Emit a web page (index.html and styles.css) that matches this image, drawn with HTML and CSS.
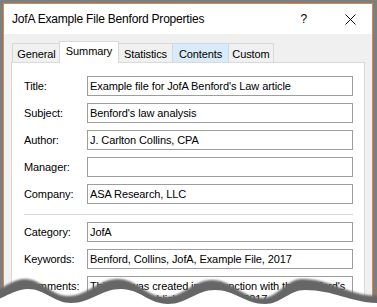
FILE: index.html
```html
<!DOCTYPE html>
<html lang="en">
<head>
  <meta charset="UTF-8">
  <title>JofA Example File Benford Properties</title>
  <link rel="stylesheet" href="styles.css">
</head>
<body>
  <div class="window">
    <div class="titlebar">
      <span class="title">JofA Example File Benford Properties</span>
      <span class="help">?</span>
      <svg class="close" width="11" height="11" viewBox="0 0 11 11">
        <path d="M0.5 0.5 L10.5 10.5 M10.5 0.5 L0.5 10.5" stroke="#111" stroke-width="1" fill="none"/>
      </svg>
    </div>

    <div class="dialog">
      <div class="tabs">
        <div class="tab tab-general">General</div>
        <div class="tab tab-summary selected">Summary</div>
        <div class="tab tab-statistics">Statistics</div>
        <div class="tab tab-contents hover">Contents</div>
        <div class="tab tab-custom">Custom</div>
      </div>

      <div class="panel">
        <div class="row">
          <label for="title">Title:</label>
          <input type="text" id="title" value="Example file for JofA Benford's Law article">
        </div>
        <div class="row">
          <label for="subject">Subject:</label>
          <input type="text" id="subject" value="Benford's law analysis">
        </div>
        <div class="row">
          <label for="author">Author:</label>
          <input type="text" id="author" value="J. Carlton Collins, CPA">
        </div>
        <div class="row">
          <label for="manager">Manager:</label>
          <input type="text" id="manager" value="">
        </div>
        <div class="row">
          <label for="company">Company:</label>
          <input type="text" id="company" value="ASA Research, LLC">
        </div>

        <hr class="sep">

        <div class="row">
          <label for="category">Category:</label>
          <input type="text" id="category" value="JofA">
        </div>
        <div class="row">
          <label for="keywords">Keywords:</label>
          <input type="text" id="keywords" value="Benford, Collins, JofA, Example File, 2017">
        </div>
        <div class="row row-multi">
          <label>Comments:</label>
          <div class="multi">This file was created in conjunction with the Benford's
Law article published by JofA in 2017.</div>
        </div>
      </div>
    </div>
  </div>

  <!-- torn paper edge over the bottom of the screenshot -->
  <svg class="tear" width="377" height="307" viewBox="0 0 377 307">
    <defs>
      <filter id="soft" x="-5%" y="-20%" width="110%" height="140%">
        <feGaussianBlur stdDeviation="1.3"/>
      </filter>
    </defs>
    <path filter="url(#soft)" fill="#666"
          d="M-20 296 C-4 296 9 279 25 279 C42 279 51 296 68 296 C88 296 98 279 118 279 C137 279 146 297 165 297 C184 297 193 280 212 280 C232 280 242 298 262 298 C278 298 286 279 302 279 C332 279 347 296 380 296 L380 310 L-20 310 Z"/>
    <path fill="#fff"
          d="M-17 303 C-1 303 12 289 28 289 C45 289 54 303 71 303 C91 303 101 289 121 289 C140 289 149 304 168 304 C187 304 196 290 215 290 C235 290 245 304 265 304 C281 304 289 290 305 290 C335 290 350 303 380 303 L380 310 L-20 310 Z"/>
  </svg>
</body>
</html>
```

FILE: styles.css
```css
*, *::before, *::after {
  box-sizing: border-box;
}
body {
  margin: 0;
  padding: 3px 4px 0 3px;
  width: 377px;
  height: 307px;
  overflow: hidden;
  position: relative;
  background: #7e7e7e;
  font-family: "Liberation Sans", Arial, sans-serif;
  font-size: 11px;
  letter-spacing: -0.1px;
  color: #000;
}
.window {
  height: 310px;
  border: 1px solid #d9864a;
  border-bottom: none;
  background: #f0f0f0;
}
/* Title bar */
.titlebar {
  height: 30px;
  background: #fff;
  display: flex;
  align-items: center;
  padding-left: 8px;
}
.title {
  font-size: 12px;
  letter-spacing: -0.2px;
  flex: 1;
}
.help {
  font-size: 12px;
  margin-right: 38px;
}
.close {
  display: block;
  margin-right: 16px;
}
/* Tabs */
.dialog {
  padding: 7px 7px 0 7px;
}
.tabs {
  display: flex;
  align-items: flex-end;
  height: 21px;
  padding-left: 1px;
}
.tab {
  height: 19px;
  border: 1px solid #d9d9d9;
  border-bottom: none;
  background: #f0f0f0;
  margin-right: -1px;
  display: flex;
  align-items: center;
  justify-content: center;
  padding-top: 1px;
}
.tab.hover {
  background: #d9eaf9;
  border-color: #c5dcef;
  position: relative;
}
.tab.selected {
  height: 22px;
  margin-bottom: -1px;
  background: #fff;
  position: relative;
  z-index: 1;
  margin-left: -1px;
  align-items: flex-start;
  padding-top: 3px;
}
.tab-general { width: 49px; }
.tab-summary { width: 60px; }
.tab-statistics { width: 55px; }
.tab-contents { width: 57px; }
.tab-custom { width: 46px; }

/* Panel */
.panel {
  background: #fff;
  border: 1px solid #d9d9d9;
  height: 260px;
  padding: 13px 11px 0 12px;
}
.row {
  display: flex;
  align-items: center;
  margin-bottom: 7px;
}
.row label {
  width: 63px;
  flex: none;
}
.row input {
  width: 266px;
  height: 20px;
  border: 1px solid #9d9d9d;
  padding: 0 2px;
  margin: 0;
  font: inherit;
  letter-spacing: -0.1px;
  color: #000;
  outline: none;
}
.row-multi {
  align-items: flex-start;
}
.row-multi label {
  padding-top: 4px;
}
.multi {
  width: 266px;
  height: 44px;
  border: 1px solid #9d9d9d;
  padding: 3px 2px;
  white-space: pre;
  line-height: 13px;
  overflow: hidden;
}
.sep {
  border: none;
  border-top: 1px solid #d6d6d6;
  margin: 10px 0 7px 0;
  width: 329px;
  height: 0;
}
.tear {
  position: absolute;
  left: 0;
  top: 0;
  pointer-events: none;
}
```
